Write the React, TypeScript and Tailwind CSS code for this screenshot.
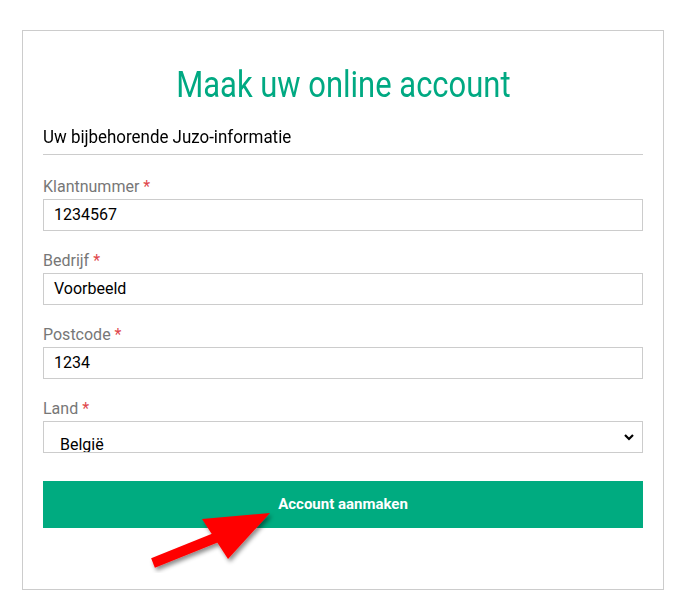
type FieldProps = {
  label: string;
  value: string;
};

function Field({ label, value }: FieldProps) {
  return (
    <div className="flex flex-col">
      <label className="text-[16px] leading-[20px] text-[#777] mb-[2px]">
        {label} <span className="text-[#e0474c]">*</span>
      </label>
      <div className="h-[32px] border border-[#ccc] flex items-center px-[10px] text-[16px] text-black">
        {value}
      </div>
    </div>
  );
}

function Arrow() {
  return (
    <svg
      className="absolute left-[140px] top-[500px]"
      width="150"
      height="80"
      viewBox="0 0 150 80"
    >
      <defs>
        <filter id="sh" x="-20%" y="-20%" width="140%" height="140%">
          <feDropShadow dx="2" dy="3" stdDeviation="2" floodColor="#000" floodOpacity="0.45" />
        </filter>
      </defs>
      <g filter="url(#sh)">
        <line x1="13" y1="63" x2="95" y2="30" stroke="#ff0000" strokeWidth="10" />
        <polygon points="130,13 62,19 88,59" fill="#ff0000" />
      </g>
    </svg>
  );
}

export default function App() {
  return (
    <div
      className="relative w-[695px] h-[613px] bg-white"
      style={{ fontFamily: 'Roboto, "Liberation Sans", sans-serif' }}
    >
      <div className="absolute left-[22px] top-[30px] w-[642px] h-[560px] border border-[#ccc]">
        <div className="px-[20px] pt-[32px]">
          <h1 className="text-center text-[36px] leading-[44px] text-[#00a982]">
            <span className="inline-block scale-x-[0.86]">Maak uw online account</span>
          </h1>
          <div className="mt-[17px] pb-[4px] border-b border-[#ccc] text-[18px] leading-[26px] text-black">
            <span className="inline-block origin-left scale-x-[0.94]">
              Uw bijbehorende Juzo-informatie
            </span>
          </div>
          <div className="mt-[22px] flex flex-col gap-[20px]">
            <Field label="Klantnummer" value="1234567" />
            <Field label="Bedrijf" value="Voorbeeld" />
            <Field label="Postcode" value="1234" />
            <div className="flex flex-col">
              <label className="text-[16px] leading-[20px] text-[#777] mb-[2px]">
                Land <span className="text-[#e0474c]">*</span>
              </label>
              <div className="h-[32px] border border-[#ccc] flex items-end justify-between pl-[16px] pr-[8px] text-[16px] text-black overflow-hidden">
                <span className="leading-[20px] translate-y-[3px]">België</span>
                <svg className="self-center" width="10" height="8" viewBox="0 0 10 8">
                  <path d="M1 2 L5 6 L9 2" stroke="#000" strokeWidth="2.2" fill="none" />
                </svg>
              </div>
            </div>
          </div>
          <button className="mt-[28px] w-full h-[47px] bg-[#00ab80] text-white font-bold text-[15px]">
            Account aanmaken
          </button>
        </div>
      </div>
      <Arrow />
    </div>
  );
}
